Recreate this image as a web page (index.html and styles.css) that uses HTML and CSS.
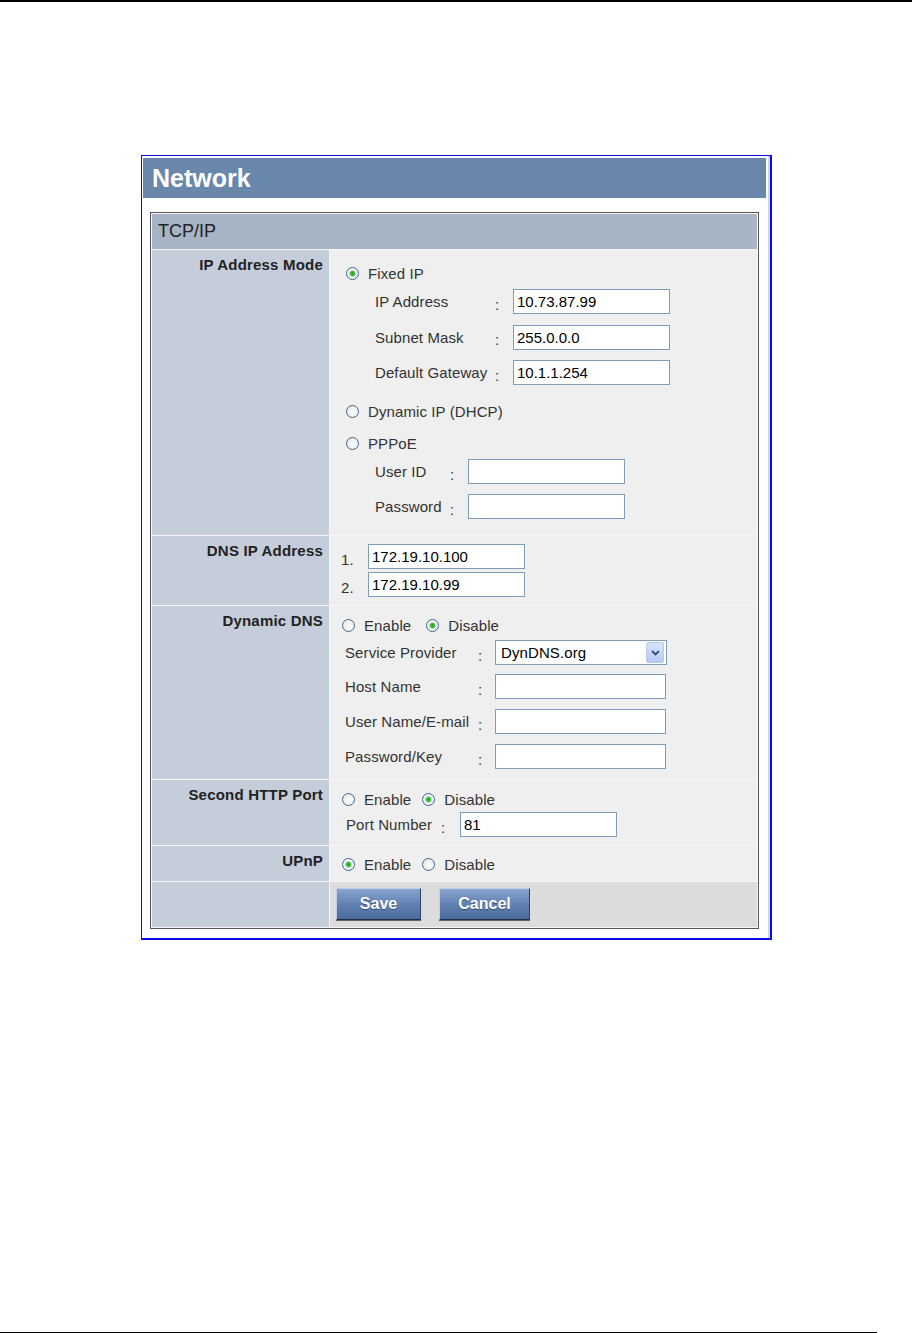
FILE: index.html
```html
<!DOCTYPE html>
<html lang="en">
<head>
    <meta charset="UTF-8">
    <title>Network - TCP/IP</title>
    <link rel="stylesheet" href="styles.css">
</head>
<body>
    <div class="page-rule top"></div>

    <div class="shot">
        <div class="title-bar">Network</div>

        <div class="panel">
            <div class="panel-head">TCP/IP</div>

            <!-- IP address mode -->
            <div class="row">
                <div class="label">IP Address Mode</div>
                <div class="cell mode">
                    <label class="opt"><input type="radio" name="mode" checked>Fixed IP</label>
                    <div class="fields ip-fields">
                        <div class="field"><span class="name">IP Address</span><span class="colon">:</span><input class="txt" type="text" value="10.73.87.99"></div>
                        <div class="field"><span class="name">Subnet Mask</span><span class="colon">:</span><input class="txt" type="text" value="255.0.0.0"></div>
                        <div class="field"><span class="name">Default Gateway</span><span class="colon">:</span><input class="txt" type="text" value="10.1.1.254"></div>
                    </div>
                    <label class="opt dhcp"><input type="radio" name="mode">Dynamic IP (DHCP)</label>
                    <label class="opt pppoe"><input type="radio" name="mode">PPPoE</label>
                    <div class="fields ppp-fields">
                        <div class="field"><span class="name">User ID</span><span class="colon">:</span><input class="txt" type="text"></div>
                        <div class="field"><span class="name">Password</span><span class="colon">:</span><input class="txt" type="password"></div>
                    </div>
                </div>
            </div>

            <!-- DNS -->
            <div class="row">
                <div class="label">DNS IP Address</div>
                <div class="cell dns">
                    <div class="field"><span class="num">1.</span><input class="txt" type="text" value="172.19.10.100"></div>
                    <div class="field"><span class="num">2.</span><input class="txt" type="text" value="172.19.10.99"></div>
                </div>
            </div>

            <!-- Dynamic DNS -->
            <div class="row">
                <div class="label">Dynamic DNS</div>
                <div class="cell ddns">
                    <div class="opts">
                        <label class="opt"><input type="radio" name="ddns">Enable</label>
                        <label class="opt"><input type="radio" name="ddns" checked>Disable</label>
                    </div>
                    <div class="fields">
                        <div class="field">
                            <span class="name">Service Provider</span><span class="colon">:</span>
                            <div class="select">
                                <span>DynDNS.org</span>
                                <span class="drop">
                                    <svg width="9" height="6" viewBox="0 0 9 6"><path d="M1 1 L4.5 4.5 L8 1" fill="none" stroke="#2d4f86" stroke-width="1.8"/></svg>
                                </span>
                            </div>
                        </div>
                        <div class="field"><span class="name">Host Name</span><span class="colon">:</span><input class="txt" type="text"></div>
                        <div class="field"><span class="name">User Name/E-mail</span><span class="colon">:</span><input class="txt" type="text"></div>
                        <div class="field"><span class="name">Password/Key</span><span class="colon">:</span><input class="txt" type="password"></div>
                    </div>
                </div>
            </div>

            <!-- Second HTTP port -->
            <div class="row">
                <div class="label">Second HTTP Port</div>
                <div class="cell port">
                    <div class="opts">
                        <label class="opt"><input type="radio" name="port">Enable</label>
                        <label class="opt"><input type="radio" name="port" checked>Disable</label>
                    </div>
                    <div class="field"><span class="name">Port Number</span><span class="colon">:</span><input class="txt" type="text" value="81"></div>
                </div>
            </div>

            <!-- UPnP -->
            <div class="row">
                <div class="label">UPnP</div>
                <div class="cell upnp">
                    <div class="opts">
                        <label class="opt"><input type="radio" name="upnp" checked>Enable</label>
                        <label class="opt"><input type="radio" name="upnp">Disable</label>
                    </div>
                </div>
            </div>

            <div class="row">
                <div class="label"></div>
                <div class="cell actions">
                    <button class="btn save">Save</button>
                    <button class="btn cancel">Cancel</button>
                </div>
            </div>
        </div>
    </div>

    <div class="page-rule bottom"></div>
</body>
</html>
```

FILE: styles.css
```css
body {
    margin: 0;
    background: #fff;
    font-family: "Liberation Sans", Arial, sans-serif;
    color: #333;
}
.page-rule {
    height: 2px;
    background: #000;
}
.page-rule.top {
    width: 100%;
}
.page-rule.bottom {
    width: 877px;
    margin-top: 392px;
}

/* screenshot frame */
.shot {
    width: 628px;
    margin: 153px 0 0 141px;
    padding: 2px 0 9px;
    border: 1px solid #0a0ae6;
    border-right-width: 2px;
    border-bottom-width: 2px;
    box-shadow: inset -2px 0 0 #d6d8ea;
}
.title-bar {
    width: 614px;
    height: 40px;
    margin-left: 1px;
    padding-left: 9px;
    background: #6987ab;
    color: #fff;
    font-size: 25px;
    font-weight: bold;
    line-height: 40px;
}

.panel {
    width: 605px;
    margin: 14px 0 0 8px;
    padding: 1px;
    border: 1px solid #555;
    background: #f6f6f6;
}
.panel-head {
    height: 35px;
    padding-left: 6px;
    background: #a6b4c6;
    color: #222;
    font-size: 18px;
    line-height: 35px;
}
.row {
    display: grid;
    grid-template-columns: 177px 427px;
    column-gap: 1px;
    margin-top: 1px;
}
.label {
    background: #c5cdda;
    padding: 7px 6px 0 0;
    text-align: right;
    font-size: 15px;
    line-height: 16px;
    font-weight: bold;
    letter-spacing: 0.2px;
    color: #222;
}
.cell {
    background: #efefef;
    font-size: 15px;
    letter-spacing: 0.1px;
}

/* radios */
.opt {
    display: flex;
    align-items: center;
    height: 22px;
}
.opts {
    display: flex;
    height: 22px;
}
.opt input {
    appearance: none;
    -webkit-appearance: none;
    width: 13px;
    height: 13px;
    margin: 0 9px 0 0;
    border: 1px solid #3d6892;
    border-radius: 50%;
    background: radial-gradient(circle at 60% 60%, #fdfdfd 0, #e2e2e2 100%);
}
.opt input:checked {
    background: radial-gradient(circle, #22a322 0, #3ab83a 2px, #b8e2b8 3px, #f6f6f6 4px, #e4e4e4 100%);
}

/* text fields */
.field {
    display: flex;
    align-items: center;
    height: 25px;
}
.name {
    white-space: nowrap;
}
.colon {
    padding-top: 5px;
}
.txt {
    box-sizing: border-box;
    width: 157px;
    height: 25px;
    margin: 0;
    padding: 0 3px;
    border: 1px solid #7f9db9;
    background: #fff;
    font-family: "Liberation Sans", Arial, sans-serif;
    font-size: 15px;
    color: #000;
}

/* IP address mode */
.mode {
    padding: 12px 0 16px 16px;
}
.ip-fields {
    margin: 5px 0 0 29px;
}
.ip-fields .field + .field {
    margin-top: 10.5px;
}
.ip-fields .name {
    width: 120px;
}
.ip-fields .colon {
    width: 18px;
}
.dhcp {
    margin-top: 15px;
}
.pppoe {
    margin-top: 10px;
}
.ppp-fields {
    margin: 5px 0 0 29px;
}
.ppp-fields .field + .field {
    margin-top: 10px;
}
.ppp-fields .name {
    width: 75px;
}
.ppp-fields .colon {
    width: 18px;
}

/* DNS */
.dns {
    padding: 8px 0 8px 11px;
}
.dns .field + .field {
    margin-top: 3px;
}
.num {
    width: 27px;
    padding-top: 6px;
}

/* Dynamic DNS */
.ddns {
    padding: 8px 0 10px 12px;
}
.ddns .opt + .opt {
    margin-left: 15px;
}
.ddns .fields {
    margin: 4px 0 0 3px;
}
.ddns .field {
    margin-bottom: 10px;
}
.ddns .field:last-child {
    margin-bottom: 0;
}
.ddns .field:first-child {
    margin-bottom: 9px;
}
.ddns .name {
    width: 133px;
}
.ddns .colon {
    width: 17px;
}
.ddns .txt {
    width: 171px;
}
.select {
    box-sizing: border-box;
    display: flex;
    align-items: center;
    justify-content: space-between;
    width: 172px;
    height: 25px;
    padding: 0 2px 0 5px;
    border: 1px solid #7f9db9;
    background: #fff;
    color: #000;
}
.drop {
    display: flex;
    align-items: center;
    justify-content: center;
    width: 16px;
    height: 19px;
    border: 1px solid #b9c9ec;
    border-radius: 2px;
    background: linear-gradient(#d8e4fb, #b6caf4);
}

/* second port */
.port {
    padding: 8px 0 8px 12px;
}
.port .opt + .opt,
.upnp .opt + .opt {
    margin-left: 11px;
}
.port .field {
    margin: 2px 0 0 4px;
}
.port .name {
    width: 95px;
}
.port .colon {
    width: 19px;
}

.upnp {
    padding: 7px 0 6px 12px;
}

/* buttons */
.actions {
    display: flex;
    gap: 18px;
    padding: 6px 0 7px 6px;
    background: #dcdcdc;
}
.btn {
    height: 32px;
    border: 1px solid;
    border-color: #c2cfe0 #2e4262 #1f2f47 #c2cfe0;
    background: linear-gradient(#89a5cd, #6585b5 45%, #4a6a9b);
    box-shadow: 0 1px 0 #666;
    color: #fff;
    font-family: "Liberation Sans", Arial, sans-serif;
    font-size: 16px;
    font-weight: bold;
    text-shadow: 0 1px 0 #33496b;
    cursor: pointer;
}
.save {
    width: 85px;
}
.cancel {
    width: 91px;
}
```
